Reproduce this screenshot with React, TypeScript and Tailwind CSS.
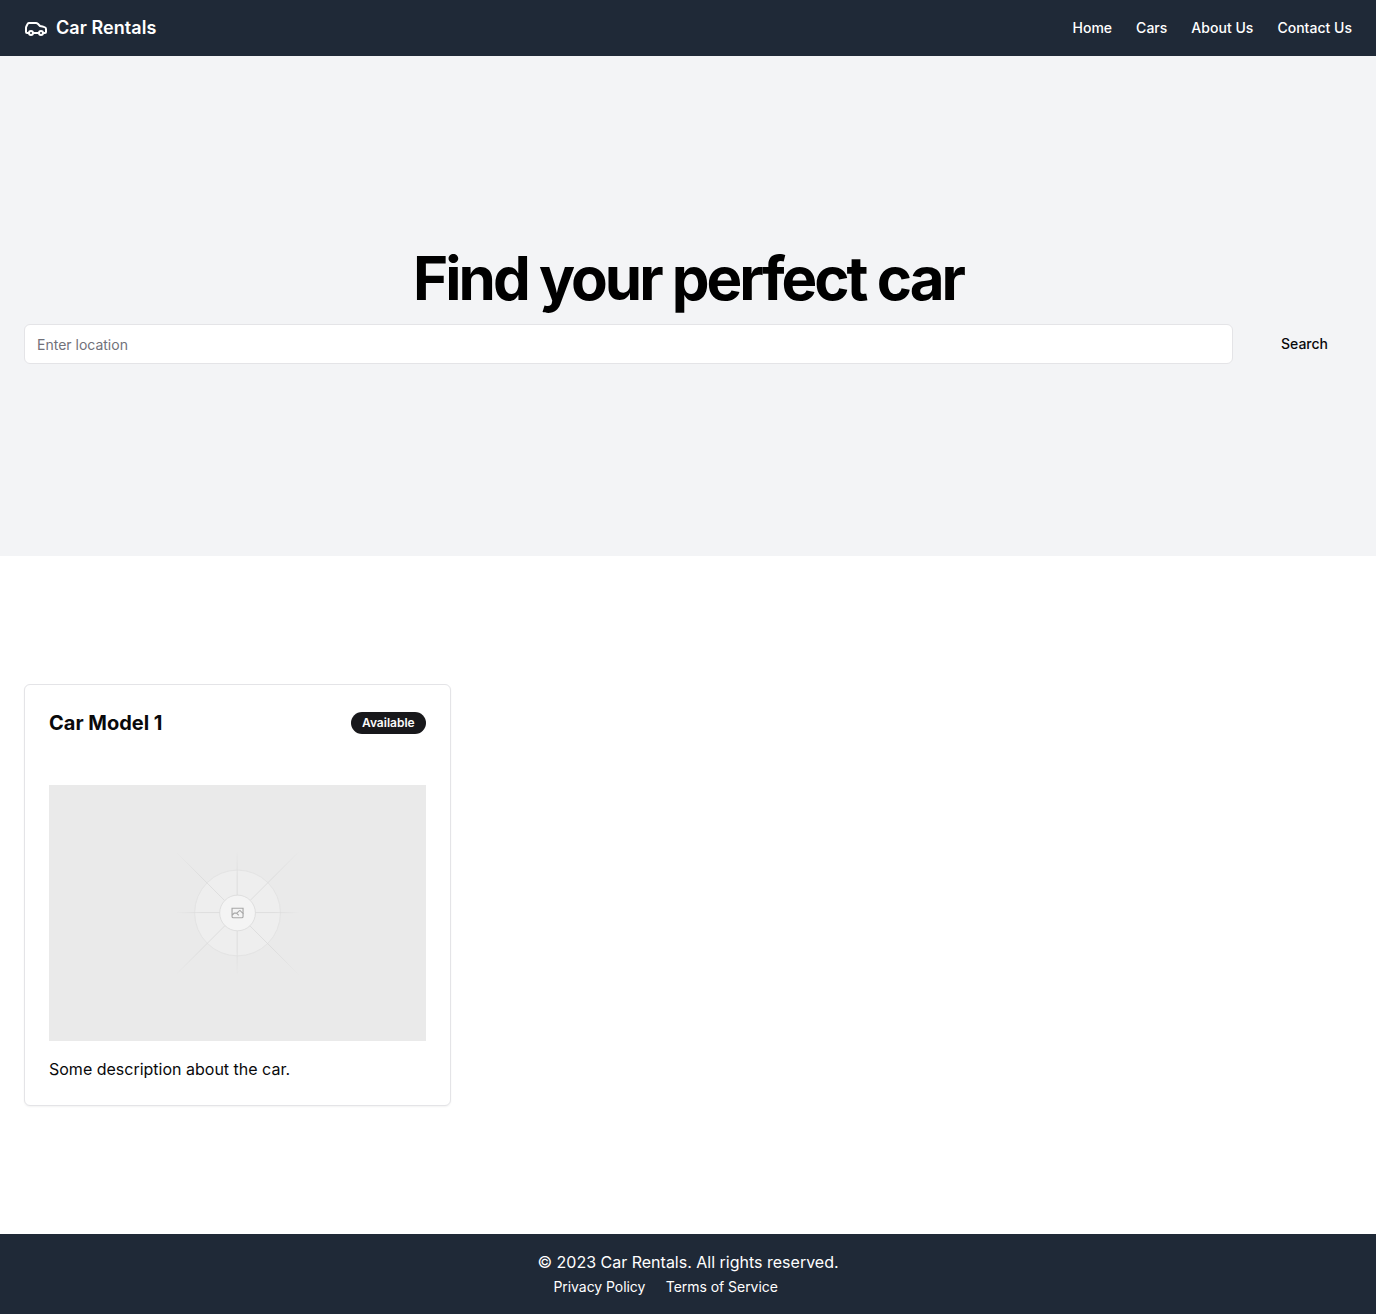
import { Car } from "lucide-react";

const navLinks = ["Home", "Cars", "About Us", "Contact Us"];

function FadeStops() {
  return (
    <>
      <stop stopColor="#C9C9C9" stopOpacity="0" />
      <stop offset=".208" stopColor="#C9C9C9" />
      <stop offset=".792" stopColor="#C9C9C9" />
      <stop offset="1" stopColor="#C9C9C9" stopOpacity="0" />
    </>
  );
}

function PlaceholderImage() {
  return (
    <svg className="block h-64 w-full bg-[#eaeaea]" viewBox="0 0 1200 1200" fill="none" preserveAspectRatio="xMidYMid slice">
      <defs>
        <linearGradient id="rising" gradientUnits="userSpaceOnUse" x1="404" y1="796" x2="796" y2="404">
          <FadeStops />
        </linearGradient>
        <linearGradient id="horizontal" gradientUnits="userSpaceOnUse" x1="404" y1="599" x2="797" y2="599">
          <FadeStops />
        </linearGradient>
        <linearGradient id="vertical" gradientUnits="userSpaceOnUse" x1="600" y1="404" x2="600" y2="796">
          <FadeStops />
        </linearGradient>
        <linearGradient id="falling" gradientUnits="userSpaceOnUse" x1="404" y1="405" x2="796" y2="797">
          <FadeStops />
        </linearGradient>
      </defs>
      <g opacity=".5" strokeWidth="2.418">
        <circle cx="600.7" cy="599.9" r="136.6" fill="#FAFAFA" stroke="#C9C9C9" opacity=".5" />
        <path stroke="url(#rising)" d="M404.3 796.6 795.7 405.2" />
        <path stroke="url(#horizontal)" d="M404.8 598.7h391.7" />
        <path stroke="url(#vertical)" d="M599.5 795.7V404" />
        <path stroke="url(#falling)" d="m795.7 796.6-391.4-391.4" />
        <circle cx="600.7" cy="599.9" r="56.8" fill="#fff" />
        <path
          fill="#666"
          fillRule="evenodd"
          clipRule="evenodd"
          d="M616.426 586.58h-31.434v16.176l3.553-3.554.531-.531h9.068l.074-.074 8.463-8.463h2.565l7.18 7.181V586.58Zm-15.715 14.654 3.698 3.699 1.283 1.282-2.565 2.565-1.282-1.283-5.2-5.199h-6.066l-5.514 5.514-.073.073v2.876a2.418 2.418 0 0 0 2.418 2.418h26.598a2.418 2.418 0 0 0 2.418-2.418v-8.317l-8.463-8.463-7.181 7.181-.071.072Zm-19.347 5.442v4.085a6.045 6.045 0 0 0 6.046 6.045h26.598a6.044 6.044 0 0 0 6.045-6.045v-7.108l1.356-1.355-1.282-1.283-.074-.073v-17.989h-38.689v23.43l-.146.146.146.147Z"
        />
        <circle cx="600.7" cy="599.9" r="56.8" stroke="#C9C9C9" />
      </g>
    </svg>
  );
}

export default function App() {
  return (
    <div className="flex min-h-[1314px] flex-col bg-white font-['Inter',sans-serif] text-[#09090b]">
      <header className="flex h-14 items-center bg-[#1f2937] px-6 text-white">
        <a href="#" className="flex items-center">
          <Car className="size-6" />
          <span className="ml-2 text-lg font-semibold tracking-[0.05px]">Car Rentals</span>
        </a>
        <nav className="ml-auto flex gap-6">
          {navLinks.map((label) => (
            <a key={label} href="#" className="text-sm font-medium tracking-[0.02px]">
              {label}
            </a>
          ))}
        </nav>
      </header>

      <main className="flex-1">
        <section className="flex h-[500px] flex-col justify-center gap-4 bg-[#f3f4f6] px-6">
          <h1 className="text-center text-6xl leading-none font-bold tracking-tighter text-black">Find your perfect car</h1>
          <form className="flex gap-6">
            <input
              type="text"
              placeholder="Enter location"
              className="h-10 min-w-0 flex-1 rounded-md border border-[#e4e4e7] bg-white px-3 py-2 text-sm placeholder:text-[#71717a]"
            />
            <button type="button" className="h-10 rounded-md px-6 text-sm font-medium">
              Search
            </button>
          </form>
        </section>

        <section className="grid grid-cols-3 gap-6 px-6 py-32">
          <article className="rounded-md border border-[#e4e4e7] bg-white p-6 shadow-xs">
            <div className="flex items-center justify-between">
              <h2 className="text-xl font-bold">Car Model 1</h2>
              <span className="rounded-full border border-transparent bg-[#18181b] px-2.5 py-0.5 text-xs font-semibold text-[#fafafa]">
                Available
              </span>
            </div>
            <div className="mt-12">
              <PlaceholderImage />
              <p className="mt-4">Some description about the car.</p>
            </div>
          </article>
        </section>
      </main>

      <footer className="flex justify-center bg-[#1f2937] py-4 text-white">
        <div>
          <p>© 2023 Car Rentals. All rights reserved.</p>
          <nav>
            <a href="#" className="ml-4 text-sm tracking-[-0.05px]">Privacy Policy</a>{" "}
            <a href="#" className="ml-4 text-sm tracking-[-0.05px]">Terms of Service</a>
          </nav>
        </div>
      </footer>
    </div>
  );
}
